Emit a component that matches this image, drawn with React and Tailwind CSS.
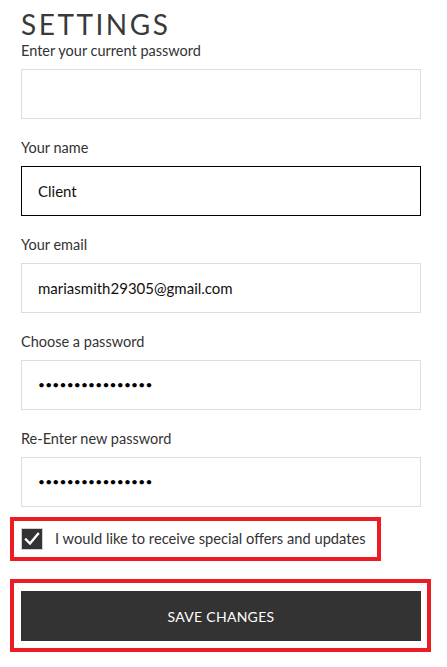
import React from "react";

const fields = [
  { label: "Enter your current password", value: "", type: "password" },
  { label: "Your name", value: "Client", type: "text", active: true },
  { label: "Your email", value: "mariasmith29305@gmail.com", type: "text" },
  { label: "Choose a password", value: "••••••••••••••••", type: "password" },
  { label: "Re-Enter new password", value: "••••••••••••••••", type: "password" },
];

const Field = ({ label, value, type, active }) => (
  <div className="mb-[19px]">
    <div className="text-[14.5px] leading-[20px] text-[#333] mb-[8px]">{label}</div>
    <div
      className={
        "h-[50px] w-[400px] flex items-center px-[16px] bg-white " +
        (active ? "border border-black" : "border border-[#dddddd]")
      }
    >
      {type === "password" ? (
        <span className="text-[12px] tracking-[0.2px] text-black">{value}</span>
      ) : (
        <span className="text-[15px] text-[#111]">{value}</span>
      )}
    </div>
  </div>
);

export default function App() {
  return (
    <div className="w-[447px] min-h-[667px] bg-white font-['Lato',sans-serif] text-[#333]">
      <div className="px-[10px]">
        <div className="px-[11px] pt-[8px]">
          <h1 className="text-[28px] leading-[32px] font-normal tracking-[0.09em] text-[#3a3a3a]">
            SETTINGS
          </h1>
          <div className="mt-[1px]">
            {fields.map((f) => (
              <Field key={f.label} {...f} />
            ))}
          </div>
        </div>

        <div className="-mt-[9px] inline-flex items-center border-4 border-[#ed1c24] pl-[7px] pr-[11px] pt-[7px] pb-[7px]">
          <span className="w-[22px] h-[22px] bg-[#333] border border-[#cfcfcf] flex items-center justify-center">
            <svg width="16" height="14" viewBox="0 0 16 14" fill="none">
              <path d="M2 7.5 L6 11.5 L14 2" stroke="white" strokeWidth="2.4" strokeLinecap="square" />
            </svg>
          </span>
          <span className="ml-[12px] text-[14.7px] leading-[20px] text-[#333] -mt-[3px]">
            I would like to receive special offers and updates
          </span>
        </div>

        <div className="mt-[18px] w-[421px] border-4 border-[#ed1c24] pl-[7px] pt-[8px] pb-[7px]">
          <button className="w-[400px] h-[50px] bg-[#333] text-white text-[14px] tracking-[0.02em] uppercase">
            Save changes
          </button>
        </div>
      </div>
    </div>
  );
}
